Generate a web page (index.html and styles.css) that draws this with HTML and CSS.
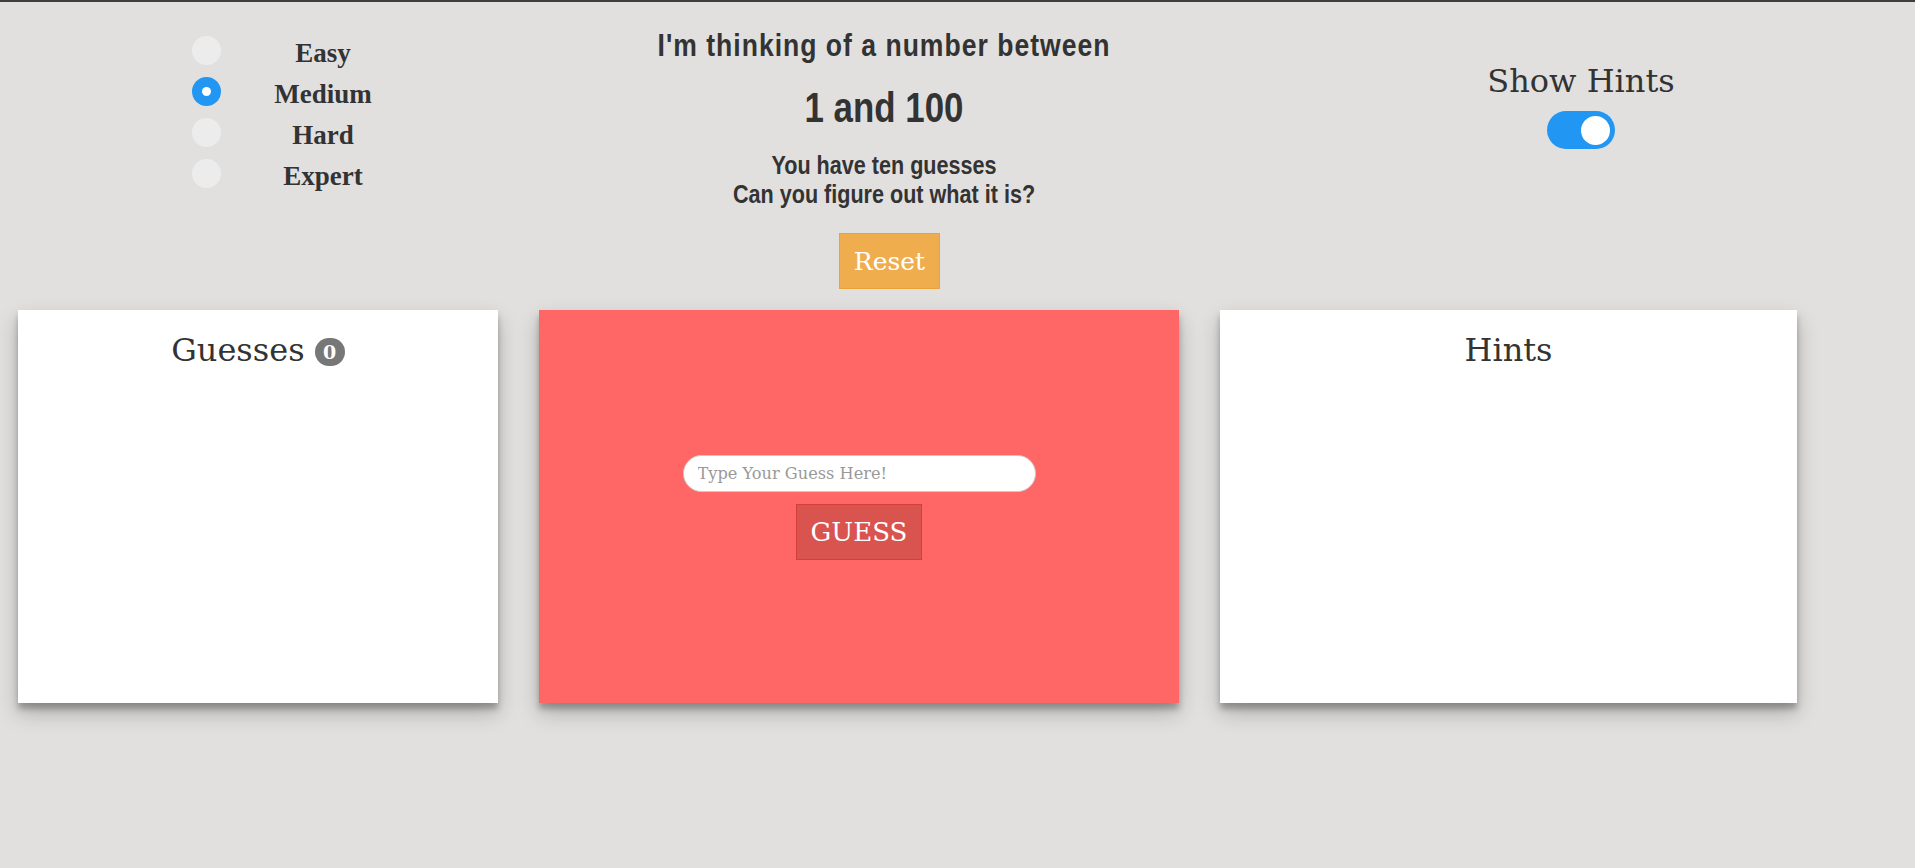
FILE: index.html
```html
<!DOCTYPE html>
<html lang="en">
<head>
<meta charset="utf-8">
<title>Guessing Game</title>
<link rel="stylesheet" href="styles.css">
</head>
<body>
<header class="top">
  <div class="levels">
    <label class="level"><span class="radio"></span><span class="level-name">Easy</span></label>
    <label class="level"><span class="radio checked"></span><span class="level-name">Medium</span></label>
    <label class="level"><span class="radio"></span><span class="level-name">Hard</span></label>
    <label class="level"><span class="radio"></span><span class="level-name">Expert</span></label>
  </div>
  <div class="intro">
    <div class="intro-copy">
      <h1 class="intro-title">I'm thinking of a number between</h1>
      <h2 class="intro-range">1 and 100</h2>
      <p class="intro-text">You have ten guesses<br>Can you figure out what it is?</p>
    </div>
    <button class="btn-reset">Reset</button>
  </div>
  <div class="hints-toggle">
    <div class="hints-label">Show Hints</div>
    <span class="switch"><span class="knob"></span></span>
  </div>
</header>
<main class="cards">
  <section class="card card-guesses">
    <h2 class="card-title">Guesses <span class="badge">0</span></h2>
  </section>
  <section class="card card-play">
    <input class="guess-input" type="text" placeholder="Type Your Guess Here!">
    <button class="btn-guess">GUESS</button>
  </section>
  <section class="card card-hints">
    <h2 class="card-title">Hints</h2>
  </section>
</main>
</body>
</html>
```
FILE: styles.css
```css
* { box-sizing: border-box; }
html, body { margin: 0; padding: 0; }
body {
  background: #e1e0df;
  border-top: 2px solid #3b3e3b;
  color: #333;
  font-family: "DejaVu Serif", serif;
  height: 868px;
  overflow: hidden;
}
.top {
  display: grid;
  grid-template-columns: 600px 568px 1fr;
  height: 287px;
}
.levels {
  padding-top: 27.5px;
  padding-left: 192px;
  display: flex;
  flex-direction: column;
}
.level {
  display: flex;
  align-items: center;
  height: 41px;
}
.radio {
  width: 29px;
  height: 29px;
  border-radius: 50%;
  background: #ececec;
  flex: none;
  display: flex;
  align-items: center;
  justify-content: center;
}
.radio.checked { background: #2196f3; }
.radio.checked::after {
  content: "";
  width: 9px;
  height: 9px;
  border-radius: 50%;
  background: #fff;
}
.level-name {
  width: 160px;
  margin-left: 22px;
  text-align: center;
  font-family: "Liberation Serif", serif;
  font-weight: bold;
  font-size: 27px;
  line-height: 41px;
  margin-top: 6px;
  color: #333;
}
.intro {
  text-align: center;
}
.intro-copy {
  font-family: "Liberation Sans", Arial, sans-serif;
  font-weight: bold;
  white-space: nowrap;
  transform: scaleX(0.83);
  color: #333;
}
.intro-title {
  margin: 0;
  padding-top: 25px;
  font-size: 32px;
  line-height: 36px;
  letter-spacing: 1.2px;
  font-weight: bold;
}
.intro-range {
  margin: 20px 0 0;
  font-size: 42px;
  line-height: 50px;
  font-weight: bold;
}
.intro-text {
  margin: 18px 0 0;
  font-size: 26px;
  line-height: 29px;
}
.btn-reset {
  margin: 24px 0 0 11px;
  height: 56px;
  padding: 0 14px;
  background: #f0ad4e;
  border: 1px solid #eea236;
  color: #fff;
  font-family: "DejaVu Serif", serif;
  font-size: 25px;
}
.hints-toggle {
  padding-left: 79px;
  display: flex;
  flex-direction: column;
  align-items: center;
}
.hints-label {
  margin-top: 60px;
  font-size: 32px;
  line-height: 38px;
  color: #333;
}
.switch {
  margin-top: 11px;
  width: 68px;
  height: 38px;
  border-radius: 19px;
  background: #2196f3;
  display: flex;
  align-items: center;
  justify-content: flex-end;
  padding-right: 5px;
}
.knob {
  width: 29px;
  height: 29px;
  border-radius: 50%;
  background: #fff;
}
.cards {
  display: flex;
  gap: 41px;
  padding-left: 18px;
  margin-top: 21px;
}
.card {
  height: 393px;
  box-shadow: 0 10px 20px rgba(0,0,0,0.22), 0 6px 6px rgba(0,0,0,0.25);
}
.card-guesses { width: 480px; background: #fff; }
.card-play {
  width: 640px;
  background: #ff6666;
  display: flex;
  flex-direction: column;
  align-items: center;
  justify-content: center;
  padding-top: 2px;
}
.card-hints { width: 577px; background: #fff; }
.card-title {
  margin: 21px 0 0;
  text-align: center;
  font-weight: normal;
  font-size: 32px;
  line-height: 38px;
  color: #333;
}
.badge {
  display: inline-block;
  width: 30px;
  height: 28px;
  border-radius: 14px;
  background: #777;
  color: #fff;
  font-size: 19px;
  font-weight: bold;
  line-height: 28px;
  text-align: center;
  vertical-align: 2px;
}
.guess-input {
  width: 353px;
  height: 37px;
  border: 1px solid #ccc;
  border-radius: 19px;
  padding: 0 14px;
  font-family: "DejaVu Serif", serif;
  font-size: 16.2px;
  color: #333;
  background: #fff;
  outline: none;
}
.guess-input::placeholder { color: #999; }
.btn-guess {
  margin-top: 12px;
  height: 56px;
  padding: 0 14px;
  background: #d9534f;
  border: 1px solid #d43f3a;
  color: #fff;
  font-family: "DejaVu Serif", serif;
  font-size: 26px;
}
```
